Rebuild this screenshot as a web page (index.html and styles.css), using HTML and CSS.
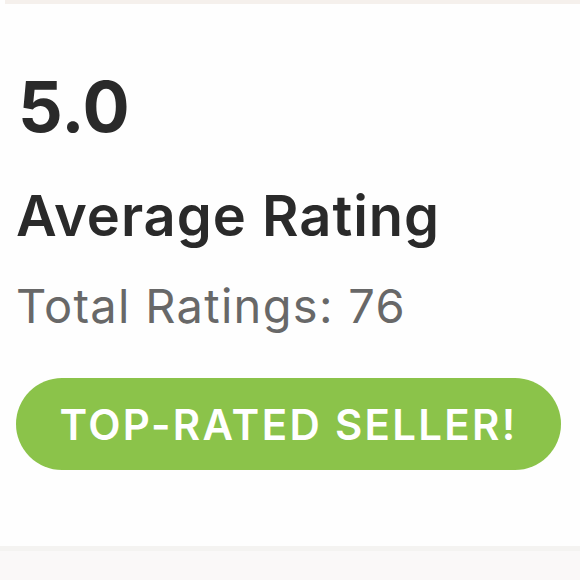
FILE: index.html
```html
<!DOCTYPE html>
<html>
<head>
<meta charset="utf-8">
<link rel="stylesheet" href="styles.css">
</head>
<body>
<div class="topbar"></div>
<section class="card">
  <div class="score">5.0</div>
  <div class="title">Average Rating</div>
  <div class="total">Total Ratings: 76</div>
  <div class="badge">TOP-RATED SELLER!</div>
</section>
<div class="divider"></div>
<div class="footer"></div>
</body>
</html>
```
FILE: styles.css
```css
html, body {
  margin: 0;
  padding: 0;
  background: #fefefe;
  font-family: Inter, "Open Sans", sans-serif;
}
.topbar {
  height: 4px;
  margin-left: 5px;
  background: #f5f0ec;
}
.card {
  height: 542px;
  box-sizing: border-box;
  padding: 68px 19px 0 16px;
  display: flex;
  flex-direction: column;
  align-items: flex-start;
}
.score {
  font-size: 70px;
  font-weight: 700;
  line-height: 70px;
  color: #2a2a2a;
  margin-left: 2px;
}
.title {
  margin-top: 46px;
  font-size: 56px;
  font-weight: 600;
  line-height: 56px;
  letter-spacing: 1px;
  color: #2a2a2a;
}
.total {
  margin-top: 38px;
  font-size: 47px;
  font-weight: 400;
  line-height: 47px;
  letter-spacing: 1.3px;
  color: #686868;
}
.badge {
  margin-top: 49px;
  align-self: stretch;
  height: 92px;
  border-radius: 46px;
  background: #8bc34a;
  color: #ffffff;
  font-size: 42px;
  font-weight: 600;
  letter-spacing: 2.3px;
  display: flex;
  align-items: center;
  justify-content: center;
}
.divider {
  height: 5px;
  background: #f4f3f1;
}
.footer {
  height: 29px;
  background: #faf8f8;
}
```
